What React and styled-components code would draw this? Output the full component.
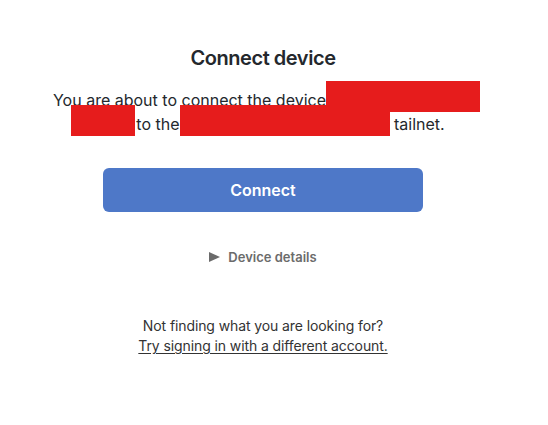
import React from "react";
import styled, { createGlobalStyle } from "styled-components";

const textDark = "#24282d";
const grey = "#6b6b6b";
const blue = "#4e78c8";
const redact = "#e61c1c";

const GlobalStyle = createGlobalStyle`
  html, body {
    margin: 0;
    padding: 0;
    background: #ffffff;
  }
  body {
    font-family: Inter, "Noto Sans", sans-serif;
    color: ${textDark};
    -webkit-font-smoothing: antialiased;
  }
`;

const Page = styled.main`
  width: 526px;
  display: flex;
  flex-direction: column;
  align-items: center;
  padding-top: 44px;
`;

const Title = styled.h1`
  margin: 0;
  font-size: 20px;
  line-height: 28px;
  font-weight: 600;
  letter-spacing: -0.45px;
`;

const Lead = styled.p`
  margin: 16px 0 0;
  width: 440px;
  padding-left: 7px;
  text-align: center;
  font-size: 16px;
  line-height: 24px;
`;

const Redacted = styled.span`
  display: inline-block;
  vertical-align: top;
  width: ${p => p.w}px;
  height: 31px;
  margin-top: -7px;
  margin-right: ${p => p.gap || 0}px;
  background: ${redact};
`;

const LineEnd = styled.span`
  padding-right: 17px;
`;

const Button = styled.button`
  margin-top: 32px;
  width: 320px;
  height: 44px;
  border: none;
  border-radius: 6px;
  background: ${blue};
  color: #ffffff;
  font-family: inherit;
  font-size: 16px;
  font-weight: 600;
  cursor: pointer;
`;

const Details = styled.div`
  margin-top: 35px;
  display: flex;
  align-items: center;
  gap: 8px;
  color: ${grey};
  font-size: 13px;
  line-height: 20px;
  font-weight: 600;
  cursor: pointer;
`;

const Footer = styled.div`
  margin-top: 49px;
  text-align: center;
  font-size: 14px;
  line-height: 20px;
  letter-spacing: -0.1px;
  color: #333333;
`;

const Link = styled.a`
  color: inherit;
  text-decoration: underline;
  text-underline-offset: 2px;
`;

const Triangle = () => (
  <svg width="11" height="10" viewBox="0 0 11 10">
    <path d="M0 0 L11 5 L0 10 Z" fill={grey} />
  </svg>
);

export default function App() {
  return (
    <>
      <GlobalStyle />
      <Page>
        <Title>Connect device</Title>
        <Lead>
          You are about to connect the device<Redacted w={154} />
          <br />
          <Redacted w={64} gap={1} />to the<Redacted w={210} />{" "}
          <LineEnd>tailnet.</LineEnd>
        </Lead>
        <Button>Connect</Button>
        <Details>
          <Triangle />
          Device details
        </Details>
        <Footer>
          Not finding what you are looking for?
          <br />
          <Link href="#">Try signing in with a different account.</Link>
        </Footer>
      </Page>
    </>
  );
}
